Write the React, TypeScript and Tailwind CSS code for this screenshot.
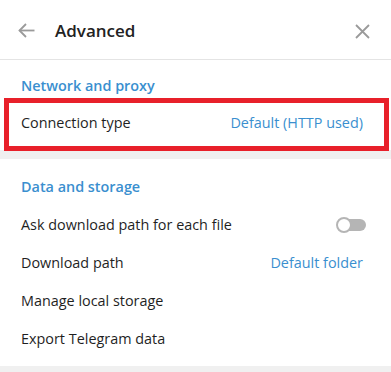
import React from "react";

const Row = ({ label, value, toggle }: { label: string; value?: string; toggle?: boolean }) => (
  <div className="flex h-[38px] items-center justify-between pl-[21px] pr-[28px]">
    <span className="text-[14.4px] leading-5 text-[#1f1f1f]">{label}</span>
    {value && <span className="text-[14.4px] leading-5 text-[#3a8fcf]">{value}</span>}
    {toggle && (
      <div className="relative -mr-[3px] h-[16px] w-[30px]">
        <div className="absolute left-[2px] right-0 top-[2px] h-[12px] rounded-full bg-[#b5b5b5]" />
        <div className="absolute left-0 top-0 h-[16px] w-[16px] rounded-full border-2 border-[#b5b5b5] bg-white" />
      </div>
    )}
  </div>
);

export default function App() {
  return (
    <div
      className="relative h-[372px] w-[391px] overflow-hidden bg-white"
      style={{ fontFamily: '"Open Sans", "Noto Sans", sans-serif' }}
    >
      <div className="flex h-[60px] items-center border-b border-[#e4e4e4] pl-[18px] pr-[21px]">
        <svg className="mt-[1px]" width="17" height="15" viewBox="0 0 17 15" fill="none" stroke="#9a9a9a" strokeWidth="1.8">
          <path d="M16.5 7.5H1.5" />
          <path d="M8 1L1.5 7.5L8 14" />
        </svg>
        <span className="ml-[20px] mt-[3px] text-[17px] font-semibold leading-6 text-[#222]">Advanced</span>
        <div className="flex-1" />
        <svg className="mt-[3px]" width="15" height="15" viewBox="0 0 15 15" fill="none" stroke="#9a9a9a" strokeWidth="1.8">
          <path d="M1 1L14 14M14 1L1 14" />
        </svg>
      </div>

      <div className="pb-[8px]">
        <div className="pl-[21px] pt-[16px] text-[14.4px] font-semibold leading-5 text-[#3a8fcf]">Network and proxy</div>
        <div className="mt-[8px]">
          <Row label="Connection type" value="Default (HTTP used)" />
        </div>
      </div>
      <div className="h-[9px] bg-[#f0f0f0]" />

      <div className="pb-[8px]">
        <div className="pl-[21px] pt-[18px] text-[14.4px] font-semibold leading-5 text-[#3a8fcf]">Data and storage</div>
        <div className="mt-[9px]">
          <Row label="Ask download path for each file" toggle />
          <Row label="Download path" value="Default folder" />
          <Row label="Manage local storage" />
          <Row label="Export Telegram data" />
        </div>
      </div>
      <div className="h-[10px] bg-[#f0f0f0]" />

      <div className="pointer-events-none absolute left-[4px] top-[98px] h-[53px] w-[385px] border-[5px] border-[#e8202a]" />
    </div>
  );
}
